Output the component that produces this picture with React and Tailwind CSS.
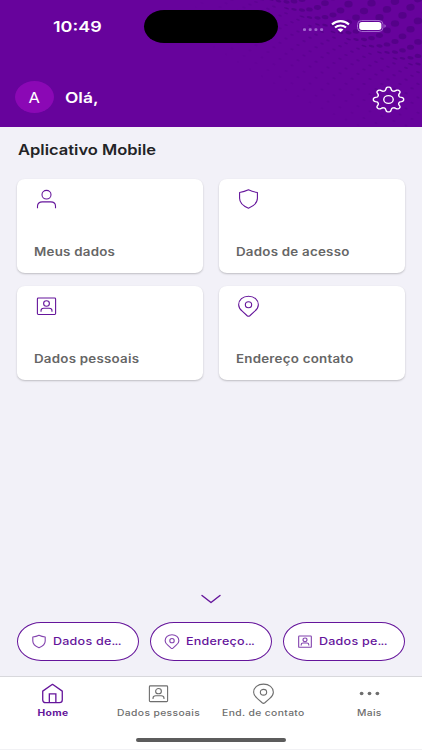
import clsx from 'clsx';

const UserIcon = ({ className }) => (
    <svg className={className} viewBox="0 0 24 24" preserveAspectRatio="none" fill="none" stroke="currentColor" strokeWidth="1.1">
        <ellipse cx="12" cy="7.3" rx="4.7" ry="4.7" vectorEffect="non-scaling-stroke" />
        <path d="M2.6 22v-2.2c0-2.900 2-4.700 5-4.700h8.800c3 0 5 1.800 5 4.700V22" vectorEffect="non-scaling-stroke" />
    </svg>
);

const ShieldIcon = ({ className }) => (
    <svg className={className} viewBox="0 0 24 24" preserveAspectRatio="none" fill="none" stroke="currentColor" strokeWidth="1.1">
        <path d="M12 2c3 1.500 6 2.400 9.300 2.900v6.300c0 5-3.600 8.400-9.300 10.800-5.700-2.400-9.300-5.800-9.300-10.800V4.900C6 4.400 9 3.500 12 2z" strokeLinejoin="round" vectorEffect="non-scaling-stroke" />
    </svg>
);

const IdIcon = ({ className }) => (
    <svg className={className} viewBox="0 0 24 24" preserveAspectRatio="none" fill="none" stroke="currentColor" strokeWidth="1.1">
        <rect x="2.500" y="3.300" width="19" height="18" rx="1" vectorEffect="non-scaling-stroke" />
        <circle cx="12" cy="9.300" r="3" vectorEffect="non-scaling-stroke" />
        <path d="M6.300 18.300V17c0-1.700 1.100-2.500 2.800-2.500h5.800c1.700 0 2.800.8 2.800 2.500v1.300" vectorEffect="non-scaling-stroke" />
    </svg>
);

const PinIcon = ({ className }) => (
    <svg className={className} viewBox="0 0 24 24" preserveAspectRatio="none" fill="none" stroke="currentColor" strokeWidth="1.1">
        <path d="M12 1.300c5.900 0 10.300 3.900 10.300 9.300 0 3.200-1.600 5.200-4 7.300l-4.900 4.700c-.9.800-1.900.8-2.800 0L5.700 17.900c-2.400-2.100-4-4.100-4-7.300C1.700 5.200 6.100 1.300 12 1.300z" vectorEffect="non-scaling-stroke" />
        <circle cx="12" cy="10.600" r="3.300" vectorEffect="non-scaling-stroke" />
    </svg>
);

const HomeIcon = ({ className }) => (
    <svg className={className} viewBox="0 0 24 24" preserveAspectRatio="none" fill="none" stroke="currentColor" strokeWidth="1.3">
        <path d="M1.800 9.300 12 1.500l10.200 7.800v10.200c0 1.900-1.100 3-3 3H4.800c-1.900 0-3-1.100-3-3z" strokeLinejoin="round" vectorEffect="non-scaling-stroke" />
        <path d="M8.700 22v-9.500h6.800V22" vectorEffect="non-scaling-stroke" />
    </svg>
);

const MoreIcon = ({ className }) => (
    <svg className={className} viewBox="0 0 21 20" fill="currentColor">
        <ellipse cx="3" cy="10" rx="1.800" ry="1.600" />
        <ellipse cx="10.500" cy="10" rx="1.800" ry="1.600" />
        <ellipse cx="18" cy="10" rx="1.800" ry="1.600" />
    </svg>
);

// Eight rounded teeth around the hub
const gearPoints = Array.from({ length: 128 }, (_, i) => {
    const a = (i / 128) * Math.PI * 2;
    const r = 12.8 + 2.1 * Math.tanh(1.5 * Math.cos(8 * a));
    return `${(16 + r * Math.cos(a)).toFixed(2)},${(16 + r * Math.sin(a)).toFixed(2)}`;
}).join(' ');

const GearIcon = ({ className }) => (
    <svg className={className} viewBox="0 0 32 32" preserveAspectRatio="none" fill="none" stroke="currentColor" strokeWidth="1.4">
        <polygon points={gearPoints} strokeLinejoin="round" vectorEffect="non-scaling-stroke" />
        <circle cx="16" cy="16" r="4.600" vectorEffect="non-scaling-stroke" />
    </svg>
);

// Halftone wave: big dots above the crest, fine ones trailing off below it
const crest = (x) => 2 + (x - 275) * 0.56 - Math.pow((x - 275) / 147, 2) * 16;
const dots = [];
[0, 3, 6.5, 11, 17, 25, 35, 46, 57, 68].forEach((d, row) => {
    for (let x = 426 - (row % 2) * 8; x > 262; x -= 15.5) {
        const y = crest(x) - d;
        if (y > -5) {
            dots.push({ x, y, rx: Math.min(4.2, 2.6 + row * 0.25), ry: Math.min(3.4, 0.8 + row * 0.42), o: 0.42, turn: 18 - row * 3 });
        }
    }
});
for (let row = 1; row < 12; row++) {
    for (let x = 424 - (row % 2) * 6; x > 190; x -= 12) {
        const y = crest(x) + row * 5 + row * row * 0.22;
        const o = Math.min(1, (x - 190) / 110) * (0.32 - row * 0.022);
        if (y > -2) {
            dots.push({ x, y, rx: 2.1 - row * 0.08, ry: 0.85, o, turn: 18 });
        }
    }
}

const Halftone = () => (
    <svg className="absolute inset-0 w-full h-full" viewBox="0 0 422 127" fill="#3d0070">
        {dots.map((d, i) => (
            <ellipse key={i} cx={d.x} cy={d.y} rx={d.rx} ry={d.ry} opacity={d.o} transform={`rotate(${d.turn} ${d.x} ${d.y})`} />
        ))}
    </svg>
);

const StatusBar = () => (
    <div className="relative flex h-[53px] pt-[10px]">
        <div className="w-[144px] pl-[53px] pt-[4px]">
            <span className="inline-block origin-left scale-x-[1.2] text-[15px] leading-[22px] font-semibold whitespace-nowrap">10:49</span>
        </div>
        <div className="w-[134px] h-[33px] bg-black rounded-[20px/16.5px]" />
        <div className="flex items-start pl-[25px] pt-[9px]">
            <svg className="w-[21px] h-[13px]" viewBox="0 0 21 13" fill="#a468cf">
                <rect x="0" y="9.300" width="3" height="2.800" rx="1" />
                <rect x="5.700" y="9.300" width="3" height="2.800" rx="1" />
                <rect x="11.400" y="9.300" width="3" height="2.800" rx="1" />
                <rect x="17.100" y="9.300" width="3" height="2.800" rx="1" />
            </svg>
            <svg className="ml-[7px] w-[19px] h-[14px]" viewBox="0 0 19 14" fill="none" stroke="white" strokeWidth="2.200">
                <path d="M1 5.500C5.800 1.100 13.200 1.100 18 5.500" />
                <path d="M4 8.500c3.200-2.700 7.800-2.700 11 0" />
                <path d="M6.500 10.600c1.700-1.500 4.300-1.500 6 0l-3 2.600z" fill="white" stroke="none" />
            </svg>
            <svg className="ml-[7px] w-[30px] h-[14px]" viewBox="0 0 30 14">
                <rect x=".5" y="1.500" width="25.500" height="11" rx="4" fill="none" stroke="#a468cf" />
                <rect x="2.200" y="3" width="22.200" height="8" rx="2.700" fill="white" />
                <path d="M27.500 5.300c1.500.6 1.500 2.800 0 3.400z" fill="#b98ad8" />
            </svg>
        </div>
    </div>
);

const Header = () => (
    <header className="relative h-[127px] bg-[#67039c] text-white overflow-hidden">
        <Halftone />
        <StatusBar />
        <div className="relative flex items-center h-[32px] mt-[28px] pl-[15px] pr-[17px]">
            <div className="w-[39px] h-[32px] rounded-[50%] bg-[#8b08b5] flex items-center justify-center">
                <span className="scale-x-[1.1] text-[15px] leading-none">A</span>
            </div>
            <span className="ml-[11px] mt-[2px] origin-left scale-x-[1.2] text-[14.500px] leading-5 font-semibold">Olá,</span>
            <button className="ml-auto mt-[5px]">
                <GearIcon className="w-[33px] h-[27px]" />
            </button>
        </div>
    </header>
);

const cards = [
    { label: 'Meus dados', Icon: UserIcon },
    { label: 'Dados de acesso', Icon: ShieldIcon },
    { label: 'Dados pessoais', Icon: IdIcon },
    { label: 'Endereço contato', Icon: PinIcon },
];

const Card = ({ label, Icon }) => (
    <button className="h-[94px] bg-white rounded-[8px/7px] shadow-[0_1px_2px_rgba(0,0,0,0.22)] pl-[17px] pt-[9px] pb-[12px] flex flex-col items-start justify-between text-left">
        <Icon className="ml-px w-[23px] h-[22px] text-[#65159b]" />
        <span className="origin-left scale-x-[1.18] text-[11.300px] leading-[17px] font-semibold tracking-[0.2px] text-[#666] whitespace-nowrap">{label}</span>
    </button>
);

const shortcuts = [
    { label: 'Dados de', Icon: ShieldIcon },
    { label: 'Endereço', Icon: PinIcon },
    { label: 'Dados pe', Icon: IdIcon },
];

const tabs = [
    { label: 'Home', Icon: HomeIcon, active: true },
    { label: 'Dados pessoais', Icon: IdIcon },
    { label: 'End. de contato', Icon: PinIcon },
    { label: 'Mais', Icon: MoreIcon },
];

const TabBar = () => (
    <nav className="h-[74px] bg-white border-t border-[#d8d8dc] border-b border-b-[#f1f1f4]">
        <div className="grid grid-cols-4 h-[61px]">
            {tabs.map(({ label, Icon, active }) => (
                <button key={label} className={clsx('flex flex-col items-center pt-[6px]', active ? 'text-[#65159b]' : 'text-[#6e6e6e]')}>
                    <Icon className="w-[23px] h-[21px]" />
                    <span className={clsx('mt-[3px] scale-x-[1.2] text-[8.600px] leading-[13px] tracking-[0.3px] whitespace-nowrap', active ? 'font-bold' : 'font-medium')}>{label}</span>
                </button>
            ))}
        </div>
        <div className="mx-auto w-[150px] h-[4px] rounded-full bg-[#5c5c5c]" />
    </nav>
);

export default function App() {
    return (
        <div className="w-[422px] h-[750px] flex flex-col bg-[#f2f1f8] font-['Inter',sans-serif] overflow-hidden">
            <Header />
            <main className="flex-1 flex flex-col px-[17px]">
                <h1 className="mt-[12px] ml-px h-[22px] text-[14px] leading-[22px] font-semibold text-[#232326]">
                    <span className="inline-block origin-left scale-x-[1.18] whitespace-nowrap">Aplicativo Mobile</span>
                </h1>
                <div className="mt-[18px] grid grid-cols-2 gap-x-[16px] gap-y-[13px]">
                    {cards.map((card) => (
                        <Card key={card.label} {...card} />
                    ))}
                </div>
                <svg className="mt-auto mx-auto w-[20px] h-[10px]" viewBox="0 0 20 10" fill="none" stroke="#65159b" strokeWidth="1.400">
                    <path d="m1 1.500 9 7 9-7" strokeLinecap="round" strokeLinejoin="round" />
                </svg>
                <div className="mt-[18px] mb-[15px] grid grid-cols-3 gap-[11px]">
                    {shortcuts.map(({ label, Icon }) => (
                        <button key={label} className="h-[39px] pl-[13px] flex items-center bg-white border border-[#65159b] rounded-[24px/19.500px] text-[#65159b]">
                            <Icon className="w-[16px] h-[15px] shrink-0 opacity-80" />
                            <span className="ml-[6px] origin-left scale-x-[1.16] text-[10.800px] leading-4 font-medium tracking-[0.2px] whitespace-nowrap">
                                {label}<span className="tracking-[-0.6px]">...</span>
                            </span>
                        </button>
                    ))}
                </div>
            </main>
            <TabBar />
        </div>
    );
}
